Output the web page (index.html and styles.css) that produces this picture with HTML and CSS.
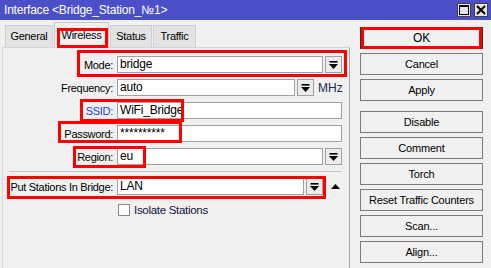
FILE: index.html
```html
<!DOCTYPE html>
<html lang="en">
<head>
    <meta charset="UTF-8">
    <title>Interface &lt;Bridge_Station_№1&gt;</title>
    <link rel="stylesheet" href="styles.css">
</head>
<body>
    <div class="window">
        <div class="titlebar">
            <span class="title">Interface &lt;Bridge_Station_№1&gt;</span>
            <div class="title-btns">
                <span class="tbtn">
                    <svg width="10" height="10" viewBox="0 0 10 10"><rect x="0.5" y="0.5" width="9" height="9" fill="none" stroke="#000" stroke-width="1"/><rect x="0" y="0" width="10" height="2" fill="#000"/></svg>
                </span>
                <span class="tbtn">
                    <svg width="10" height="10" viewBox="0 0 10 10"><path d="M1 1 L9 9 M9 1 L1 9" stroke="#000" stroke-width="2"/></svg>
                </span>
            </div>
        </div>

        <div class="main">
            <div class="left">
                <div class="tabs">
                    <div class="tab tab-general">General</div>
                    <div class="tab tab-wireless active">Wireless</div>
                    <div class="tab tab-status">Status</div>
                    <div class="tab tab-traffic">Traffic</div>
                </div>
                <div class="panel">
                    <div class="row">
                        <label class="lbl">Mode:</label>
                        <div class="box">bridge</div>
                        <span class="drop"><svg width="9" height="8" viewBox="0 0 9 8"><rect x="0.5" y="0" width="8" height="1.6" fill="#000"/><polygon points="0,3 9,3 4.5,8" fill="#000"/></svg></span>
                    </div>
                    <div class="row">
                        <label class="lbl">Frequency:</label>
                        <div class="box">auto</div>
                        <span class="drop"><svg width="9" height="8" viewBox="0 0 9 8"><rect x="0.5" y="0" width="8" height="1.6" fill="#000"/><polygon points="0,3 9,3 4.5,8" fill="#000"/></svg></span>
                        <span class="unit">MHz</span>
                    </div>
                    <div class="row">
                        <label class="lbl lbl-blue">SSID:</label>
                        <div class="box">WiFi_Bridge</div>
                    </div>
                    <div class="row">
                        <label class="lbl">Password:</label>
                        <div class="box">**********</div>
                    </div>
                    <div class="row">
                        <label class="lbl">Region:</label>
                        <div class="box">eu</div>
                        <span class="drop"><svg width="9" height="8" viewBox="0 0 9 8"><rect x="0.5" y="0" width="8" height="1.6" fill="#000"/><polygon points="0,3 9,3 4.5,8" fill="#000"/></svg></span>
                    </div>
                    <div class="separator"></div>
                    <div class="row">
                        <label class="lbl">Put Stations In Bridge:</label>
                        <div class="box">LAN</div>
                        <span class="drop"><svg width="9" height="8" viewBox="0 0 9 8"><rect x="0.5" y="0" width="8" height="1.6" fill="#000"/><polygon points="0,3 9,3 4.5,8" fill="#000"/></svg></span>
                        <span class="collapse"><svg width="9" height="5" viewBox="0 0 9 5"><polygon points="4.5,0 9,5 0,5" fill="#000"/></svg></span>
                    </div>
                    <div class="check-row">
                        <span class="checkbox"></span>
                        <span class="check-label">Isolate Stations</span>
                    </div>
                </div>
            </div>

            <div class="side">
                <button class="btn btn-default">OK</button>
                <button class="btn">Cancel</button>
                <button class="btn btn-group-end">Apply</button>
                <button class="btn">Disable</button>
                <button class="btn">Comment</button>
                <button class="btn">Torch</button>
                <button class="btn">Reset Traffic Counters</button>
                <button class="btn">Scan...</button>
                <button class="btn">Align...</button>
            </div>
        </div>

        <!-- red annotation frames drawn over the dialog -->
        <div class="mark mark-wireless"></div>
        <div class="mark mark-ok"></div>
        <div class="mark mark-mode"></div>
        <div class="mark mark-ssid"></div>
        <div class="mark mark-password"></div>
        <div class="mark mark-region"></div>
        <div class="mark mark-bridge"></div>
    </div>
</body>
</html>
```

FILE: styles.css
```css
body {
    margin: 0;
    padding: 0;
    background: #f0f0f0;
    font-family: "Liberation Sans", Arial, sans-serif;
    font-size: 11px;
    color: #000000;
}
.window {
    position: relative;
    width: 491px;
    height: 268px;
    background: #f0f0f0;
    overflow: hidden;
}
.titlebar {
    height: 20px;
    background: #4b50c8;
    display: flex;
    align-items: center;
    justify-content: space-between;
    padding: 0 3px 0 4px;
}
.title {
    color: #ffffff;
    font-size: 12px;
    letter-spacing: -0.2px;
}
.title-btns {
    display: flex;
    gap: 3px;
}
.tbtn {
    width: 12px;
    height: 12px;
    border: 1px solid #404040;
    background: #e4e4e4;
    display: flex;
    align-items: center;
    justify-content: center;
}
.main {
    display: flex;
}
.left {
    width: 350px;
    padding-top: 2px;
}
.tabs {
    display: flex;
    align-items: flex-end;
    gap: 1px;
    height: 25px;
    margin-left: 5px;
    position: relative;
    z-index: 1;
}
.tab {
    height: 22px;
    line-height: 21px;
    text-align: center;
    background: #e3e3e3;
    border: 1px solid #d0d0d0;
    border-bottom: none;
    box-sizing: border-box;
    letter-spacing: -0.3px;
}
.tab-general { width: 48px; }
.tab-wireless { width: 55px; }
.tab-status { width: 42px; }
.tab-traffic { width: 43px; }
.tab.active {
    height: 26px;
    line-height: 25px;
    background: #f0f0f0;
    border-color: #c8c8c8;
    margin-bottom: -1px;
}
.panel {
    margin-left: 2px;
    height: 220px;
    border-top: 1px solid #d4d4d4;
    border-left: 1px solid #d8d8d8;
    border-right: 1px solid #a8a8a8;
    padding: 8px 7px 0 0;
}
.row {
    display: flex;
    align-items: center;
    height: 17px;
    margin-bottom: 6px;
}
.lbl {
    width: 110px;
    margin-right: 4px;
    text-align: right;
    white-space: nowrap;
    letter-spacing: -0.3px;
}
.lbl-blue {
    color: #1f3fe0;
}
.box {
    flex: 1;
    height: 17px;
    box-sizing: border-box;
    border: 1px solid #a0a0a0;
    background: #ffffff;
    padding-left: 2px;
    line-height: 15px;
    font-size: 12px;
    letter-spacing: -0.2px;
}
.drop {
    width: 17px;
    height: 17px;
    box-sizing: border-box;
    margin-left: 2px;
    border: 1px solid #a0a0a0;
    background: #ececec;
    display: flex;
    align-items: center;
    justify-content: center;
}
.unit {
    width: 24px;
    margin-left: 4px;
    font-size: 12px;
    color: #1c2a50;
}
.collapse {
    width: 18px;
    display: flex;
    justify-content: center;
    margin-left: 1px;
    padding-left: 4px;
    box-sizing: border-box;
}
.separator {
    height: 1px;
    background: #c4c4c4;
    margin: 1px 0 6px 6px;
}
.check-row {
    display: flex;
    align-items: center;
    margin-top: 9px;
    padding-left: 115px;
}
.checkbox {
    width: 12px;
    height: 12px;
    box-sizing: border-box;
    border: 1px solid #8a8a8a;
    background: #ffffff;
}
.check-label {
    margin-left: 4px;
    font-size: 11.5px;
    letter-spacing: -0.3px;
    color: #111144;
}
.side {
    margin-left: 10px;
    padding-top: 7px;
    display: flex;
    flex-direction: column;
    width: 123px;
}
.btn {
    height: 22px;
    margin-bottom: 4px;
    padding: 0;
    border: 1px solid #7a7a7a;
    background: #f0f0f0;
    font-family: "Liberation Sans", Arial, sans-serif;
    font-size: 11px;
    letter-spacing: -0.2px;
    color: #000000;
}
.btn-default {
    border-color: #303030;
    font-size: 12px;
}
.btn-group-end {
    margin-bottom: 10px;
}
.mark {
    position: absolute;
    border: 3px solid #ff0000;
    box-sizing: border-box;
    z-index: 2;
}
.mark-wireless { left: 57px; top: 28px; width: 51px; height: 20px; }
.mark-ok { left: 361px; top: 27px; width: 121px; height: 22px; }
.mark-mode { left: 77px; top: 50px; width: 270px; height: 27px; }
.mark-ssid { left: 80px; top: 99px; width: 104px; height: 23px; }
.mark-password { left: 58px; top: 121px; width: 124px; height: 22px; }
.mark-region { left: 73px; top: 146px; width: 73px; height: 22px; }
.mark-bridge { left: 7px; top: 176px; width: 319px; height: 23px; }
```
